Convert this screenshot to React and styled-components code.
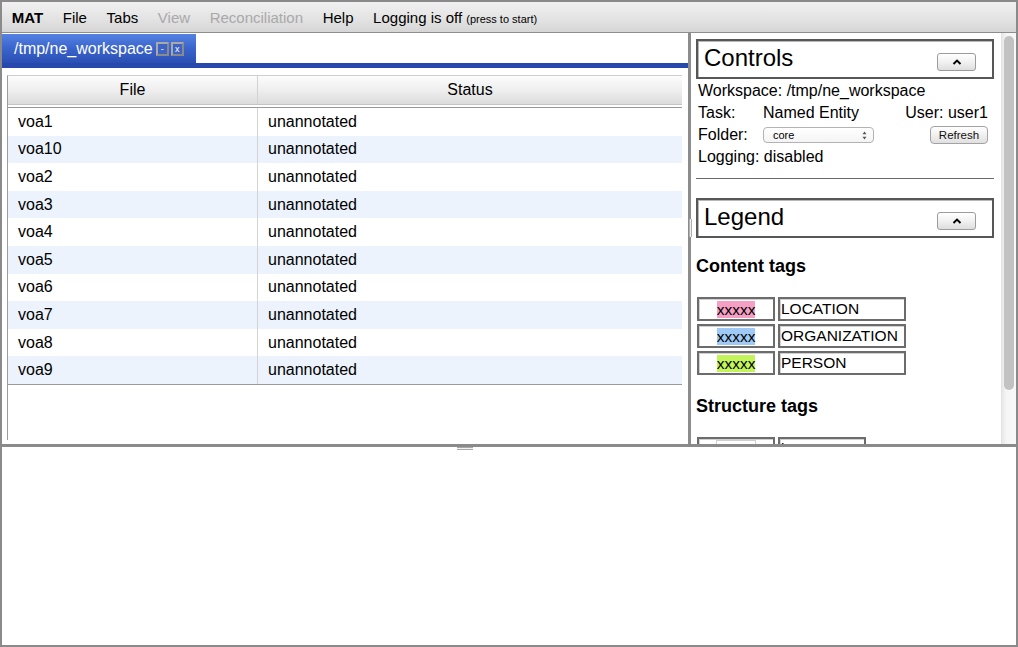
import React from 'react';
import styled, { createGlobalStyle } from 'styled-components';

const GlobalStyle = createGlobalStyle`
  html, body { margin: 0; padding: 0; height: 100%; }
  body {
    font-family: "Liberation Sans", Arial, Helvetica, sans-serif;
    color: #000;
    overflow: hidden;
    background: #fff;
  }
  #root { height: 100%; }
`;

const Frame = styled.div`
  width: 1018px;
  height: 647px;
  box-sizing: border-box;
  border: 2px solid #8a8a8a;
  display: flex;
  flex-direction: column;
  background: #fff;
`;

const MenuBar = styled.div`
  height: 30px;
  flex-shrink: 0;
  display: flex;
  align-items: center;
  padding-left: 0;
  background: linear-gradient(to bottom, #f1f1f1, #e2e2e2 60%, #d6d6d6);
  border-bottom: 1px solid #8e8e8e;
  font-size: 15px;
`;

const MenuItem = styled.span`
  padding: 0 9.8px;
  color: ${p => (p.$disabled ? '#a9a9a9' : '#000')};
  font-weight: ${p => (p.$bold ? 'bold' : 'normal')};
  white-space: nowrap;
`;

const Small = styled.span`
  font-size: 11px;
`;

const Main = styled.div`
  height: 411px;
  flex-shrink: 0;
  display: flex;
`;

const LeftPane = styled.div`
  width: 686px;
  flex-shrink: 0;
  display: flex;
  flex-direction: column;
  background: #fff;
`;

const TabStrip = styled.div`
  height: 29px;
  padding-top: 1px;
  flex-shrink: 0;
  display: flex;
`;

const Tab = styled.div`
  display: flex;
  align-items: center;
  padding: 1px 12px 0 12px;
  background: linear-gradient(to bottom, #5482e2, #3a64cc 50%, #2a4fb3);
  color: #fff;
  font-size: 16px;
`;

const TabBtn = styled.span`
  width: 9px;
  height: 10px;
  margin-left: ${p => (p.$first ? '3px' : '2px')};
  border: 2px solid #a9a9a9;
  border-right-color: #8a8a8a;
  border-bottom-color: #8a8a8a;
  color: #fff;
  font-size: 9px;
  line-height: 9px;
  display: inline-flex;
  align-items: center;
  justify-content: center;
  background: #3d63c4;
`;

const BlueBar = styled.div`
  height: 5px;
  flex-shrink: 0;
  background: #2749ae;
`;

const GridWrap = styled.div`
  flex: 1;
  min-height: 0;
  padding: 7px 6px 4px 5px;
  display: flex;
`;

const Grid = styled.div`
  flex: 1;
  border-left: 1px solid #9c9c9c;
  border-top: 1px solid #cfcfcf;
  font-size: 16px;
`;

const HeaderRow = styled.div`
  display: grid;
  grid-template-columns: 250px 1fr;
  height: 28px;
  background: linear-gradient(to bottom, #fcfcfc, #ededed 55%, #dcdcdc);
  border-bottom: 1px solid #c4c4c4;
`;

const HeaderCell = styled.div`
  display: flex;
  align-items: center;
  justify-content: center;
  border-right: ${p => (p.$last ? 'none' : '1px solid #d2d2d2')};
`;

const Body = styled.div`
  margin-top: 2px;
  border-top: 1px solid #9a9a9a;
  border-bottom: 1px solid #9a9a9a;
`;

const Row = styled.div`
  display: grid;
  grid-template-columns: 250px 1fr;
  height: 27.6px;
  background: ${p => (p.$alt ? '#ecf3fd' : '#fff')};
`;

const Cell = styled.div`
  display: flex;
  align-items: center;
  padding-left: 10px;
  border-right: ${p => (p.$last ? 'none' : '1px solid #d4d4d4')};
`;

const VDivider = styled.div`
  width: 3px;
  flex-shrink: 0;
  background: #8c8c8c;
  position: relative;
`;

const VGrip = styled.div`
  position: absolute;
  left: 1px;
  top: 186px;
  width: 3px;
  height: 18px;
  border-left: 1px solid #b0b0b0;
  border-right: 1px solid #b0b0b0;
  background: #eee;
  box-sizing: border-box;
`;

const RightPane = styled.div`
  flex: 1;
  min-width: 0;
  display: flex;
  background: #fff;
`;

const RightContent = styled.div`
  flex: 1;
  min-width: 0;
  overflow: hidden;
  padding: 6px 7px 0 5px;
`;

const ScrollTrack = styled.div`
  width: 15px;
  flex-shrink: 0;
  box-sizing: border-box;
  padding: 3px 2px 0 2px;
  background: linear-gradient(to right, #e8e8e8, #f6f6f6 35%, #f8f8f8);
  border-left: 1px solid #e2e2e2;
`;

const ScrollThumb = styled.div`
  height: 354px;
  border-radius: 5px;
  background: #c2c2c2;
`;

const SectionBox = styled.div`
  height: 40px;
  box-sizing: border-box;
  border: 2px solid #575757;
  box-shadow: inset 1px 1px 0 #b8b8b8;
  display: flex;
  align-items: center;
  justify-content: space-between;
  padding: 0 16px 0 6px;
`;

const SectionTitle = styled.span`
  font-size: 24px;
  line-height: 28px;
  margin-top: -2px;
`;

const CollapseBtn = styled.button`
  width: 39px;
  height: 18px;
  margin-top: 5px;
  padding: 0;
  border: 1px solid #9c9c9c;
  border-radius: 3px;
  background: linear-gradient(to bottom, #ffffff, #f1f1f1 50%, #dedede);
  display: flex;
  align-items: center;
  justify-content: center;
`;

const Info = styled.div`
  padding: 1px 6px 0 2px;
  font-size: 16px;
  line-height: 22px;
`;

const InfoRow = styled.div`
  display: flex;
  align-items: center;
  height: 22px;
`;

const Label = styled.span`
  width: 65px;
  flex-shrink: 0;
`;

const Spacer = styled.span`
  flex: 1;
`;

const Select = styled.div`
  width: 111px;
  height: 16px;
  box-sizing: border-box;
  border: 1px solid #b3b3b3;
  border-radius: 4px;
  background: linear-gradient(to bottom, #ffffff, #f4f4f4);
  font-size: 11px;
  line-height: 14px;
  padding: 0 6px 0 9px;
  display: flex;
  align-items: center;
  justify-content: space-between;
`;

const SmallBtn = styled.button`
  width: 58px;
  height: 18px;
  padding: 0;
  border: 1px solid #a2a2a2;
  border-radius: 4px;
  background: linear-gradient(to bottom, #ffffff, #f0f0f0 50%, #e0e0e0);
  font-family: "Liberation Sans", Arial, sans-serif;
  font-size: 11.5px;
  color: #111;
`;

const Rule = styled.div`
  height: 1px;
  background: #6a6a6a;
  margin: 10px 0 19px;
`;

const Heading = styled.h3`
  font-size: 18px;
  line-height: 21px;
  font-weight: bold;
  margin: ${p => p.$top || '18px'} 0 0 0;
`;

const TagGrid = styled.div`
  display: grid;
  grid-template-columns: 78px ${p => p.$labelWidth};
  grid-auto-rows: 24px;
  gap: 3px;
  margin: 20px 0 0 1px;
`;

const TagCell = styled.div`
  box-sizing: border-box;
  border: 2px solid #6c6c6c;
  box-shadow: inset 1px 1px 0 #d0d0d0;
  display: flex;
  align-items: center;
  justify-content: ${p => (p.$center ? 'center' : 'flex-start')};
  padding-left: ${p => (p.$center ? '0' : '1px')};
  font-size: 15.5px;
  white-space: nowrap;
  overflow: hidden;
`;

const Swatch = styled.span`
  background: ${p => p.$color || 'transparent'};
  border: ${p => (p.$outlined ? '1px solid #cfcfcf' : 'none')};
  line-height: 17px;
  font-size: 15.5px;
`;

const HSplitter = styled.div`
  height: 3px;
  flex-shrink: 0;
  background: #8a8a8a;
  position: relative;
`;

const HGrip = styled.div`
  position: absolute;
  top: 3px;
  left: 455px;
  width: 16px;
  height: 3px;
  border-top: 1px solid #a8a8a8;
  border-bottom: 1px solid #a8a8a8;
  box-sizing: border-box;
  background: #f2f2f2;
`;

const BottomPane = styled.div`
  flex: 1;
  background: #fff;
`;

const files = ['voa1', 'voa10', 'voa2', 'voa3', 'voa4', 'voa5', 'voa6', 'voa7', 'voa8', 'voa9'];

const contentTags = [
  { color: '#f59fc4', name: 'LOCATION' },
  { color: '#9fcaf6', name: 'ORGANIZATION' },
  { color: '#c3f45a', name: 'PERSON' },
];

const structureTags = ['lex', 'SEGMENT'];

const Caret = () => (
  <svg width="10" height="6" viewBox="0 0 10 6">
    <path d="M1.5 5 L5 1.6 L8.5 5" fill="none" stroke="#000" strokeWidth="2" />
  </svg>
);

const UpDown = () => (
  <svg width="5" height="9" viewBox="0 0 5 9">
    <path d="M2.5 0.5 L4.5 3.3 L0.5 3.3 Z M2.5 8.5 L4.5 5.7 L0.5 5.7 Z" fill="#555" />
  </svg>
);

function App() {
  return (
    <>
      <GlobalStyle />
      <Frame>
        <MenuBar>
          <MenuItem $bold>MAT</MenuItem>
          <MenuItem>File</MenuItem>
          <MenuItem>Tabs</MenuItem>
          <MenuItem $disabled>View</MenuItem>
          <MenuItem $disabled>Reconciliation</MenuItem>
          <MenuItem>Help</MenuItem>
          <MenuItem>Logging is off <Small>(press to start)</Small></MenuItem>
        </MenuBar>

        <Main>
          <LeftPane>
            <TabStrip>
              <Tab>
                /tmp/ne_workspace
                <TabBtn $first>-</TabBtn>
                <TabBtn>x</TabBtn>
              </Tab>
            </TabStrip>
            <BlueBar />
            <GridWrap>
              <Grid>
                <HeaderRow>
                  <HeaderCell>File</HeaderCell>
                  <HeaderCell $last>Status</HeaderCell>
                </HeaderRow>
                <Body>
                  {files.map((f, i) => (
                    <Row key={f} $alt={i % 2 === 1}>
                      <Cell>{f}</Cell>
                      <Cell $last>unannotated</Cell>
                    </Row>
                  ))}
                </Body>
              </Grid>
            </GridWrap>
          </LeftPane>

          <VDivider>
            <VGrip />
          </VDivider>

          <RightPane>
            <RightContent>
              <SectionBox>
                <SectionTitle>Controls</SectionTitle>
                <CollapseBtn><Caret /></CollapseBtn>
              </SectionBox>
              <Info>
                <InfoRow>Workspace: /tmp/ne_workspace</InfoRow>
                <InfoRow>
                  <Label>Task:</Label>
                  <span>Named Entity</span>
                  <Spacer />
                  <span>User: user1</span>
                </InfoRow>
                <InfoRow>
                  <Label>Folder:</Label>
                  <Select>
                    <span>core</span>
                    <UpDown />
                  </Select>
                  <Spacer />
                  <SmallBtn>Refresh</SmallBtn>
                </InfoRow>
                <InfoRow>Logging: disabled</InfoRow>
              </Info>
              <Rule />

              <SectionBox>
                <SectionTitle>Legend</SectionTitle>
                <CollapseBtn><Caret /></CollapseBtn>
              </SectionBox>

              <Heading>Content tags</Heading>
              <TagGrid $labelWidth="128px">
                {contentTags.map(t => (
                  <React.Fragment key={t.name}>
                    <TagCell $center><Swatch $color={t.color}>xxxxx</Swatch></TagCell>
                    <TagCell>{t.name}</TagCell>
                  </React.Fragment>
                ))}
              </TagGrid>

              <Heading $top="21px">Structure tags</Heading>
              <TagGrid $labelWidth="88px">
                {structureTags.map(t => (
                  <React.Fragment key={t}>
                    <TagCell $center><Swatch $outlined>xxxxx</Swatch></TagCell>
                    <TagCell>{t}</TagCell>
                  </React.Fragment>
                ))}
              </TagGrid>
            </RightContent>
            <ScrollTrack>
              <ScrollThumb />
            </ScrollTrack>
          </RightPane>
        </Main>

        <HSplitter>
          <HGrip />
        </HSplitter>
        <BottomPane />
      </Frame>
    </>
  );
}

export default App;
